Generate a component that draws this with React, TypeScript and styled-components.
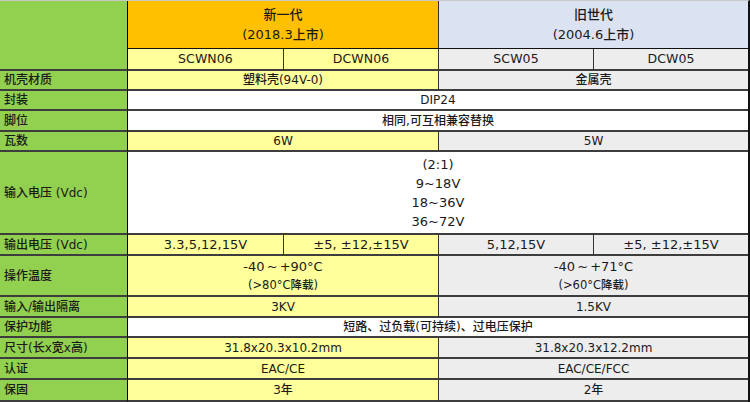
import React from "react";
import styled, { createGlobalStyle, css } from "styled-components";

const Global = createGlobalStyle`
  html, body { margin: 0; padding: 0; background: #ffffff; }
  body { font-family: "DejaVu Sans", "Noto Sans CJK SC", sans-serif; color: #1a1a1a; font-weight: 500; }
`;

const Sheet = styled.div`
  display: grid;
  width: 750px;
  box-sizing: border-box;
  grid-template-columns: 128px 156px 155px 155px 154px;
  grid-template-rows: 48px 22px 20px 20px 21px 20px 83px 21px 41px 21px 20px 21px 21px 22px;
  border-top: 1px solid #c9c9c9;
  border-right: 2px solid #111111;
`;

type Tone = "green" | "orange" | "blue" | "yellow" | "grey" | "white";

const tones: Record<Tone, string> = {
  green: "#92d050",
  orange: "#ffc000",
  blue: "#dbe3f2",
  yellow: "#ffff9c",
  grey: "#ededed",
  white: "#ffffff",
};

const Cell = styled.div<{ $tone: Tone; $col: string; $row?: string; $last?: boolean; $thin?: boolean }>`
  box-sizing: border-box;
  grid-column: ${(p) => p.$col};
  ${(p) => p.$row && css`grid-row: ${p.$row};`}
  background: ${(p) => tones[p.$tone]};
  border-bottom: ${(p) => (p.$thin ? "1px solid #111" : "2px solid #3d3d3d")};
  border-right: ${(p) => (p.$last ? "none" : "1px solid #333")};
  display: flex;
  flex-direction: column;
  align-items: center;
  justify-content: center;
  font-size: 12px;
  line-height: 18px;
  white-space: nowrap;
  overflow: hidden;
`;

const Label = styled(Cell)`
  align-items: flex-start;
  padding-left: 4px;
  border-right: 1px solid #000;
  font-size: 12px;
`;

const Head = styled.span`
  font-size: 13px;
  line-height: 20px;
`;

const Model = styled.span`
  font-size: 12.5px;
  letter-spacing: 0.1px;
`;

const Big = styled.span`
  font-size: 13px;
  line-height: 19px;
`;

const Small = styled.span`
  font-size: 11.5px;
  line-height: 18px;
`;

const Mid = styled.span`
  font-size: 13px;
  line-height: 18px;
`;

const Temp = styled(Mid)`
  word-spacing: -2px;
`;

type Row = {
  label: string;
  kind: "split" | "four" | "full";
  a?: React.ReactNode;
  b?: React.ReactNode;
  cells?: React.ReactNode[];
  full?: React.ReactNode;
};

const rows: Row[] = [
  { label: "机壳材质", kind: "split", a: "塑料壳(94V-0)", b: "金属壳" },
  { label: "封装", kind: "full", full: "DIP24" },
  { label: "脚位", kind: "full", full: "相同,可互相兼容替换" },
  { label: "瓦数", kind: "split", a: "6W", b: "5W" },
  {
    label: "输入电压 (Vdc)",
    kind: "full",
    full: (
      <>
        <Big>(2:1)</Big>
        <Big>9~18V</Big>
        <Big>18~36V</Big>
        <Big>36~72V</Big>
      </>
    ),
  },
  {
    label: "输出电压 (Vdc)",
    kind: "four",
    cells: [
      <Mid key="1">3.3,5,12,15V</Mid>,
      <Mid key="2">±5, ±12,±15V</Mid>,
      <Mid key="3">5,12,15V</Mid>,
      <Mid key="4">±5, ±12,±15V</Mid>,
    ],
  },
  {
    label: "操作温度",
    kind: "split",
    a: (
      <>
        <Temp>-40 ~ +90°C</Temp>
        <Small>(&gt;80°C降载)</Small>
      </>
    ),
    b: (
      <>
        <Temp>-40 ~ +71°C</Temp>
        <Small>(&gt;60°C降载)</Small>
      </>
    ),
  },
  { label: "输入/输出隔离", kind: "split", a: "3KV", b: "1.5KV" },
  { label: "保护功能", kind: "full", full: "短路、过负载(可持续)、过电压保护" },
  { label: "尺寸(长x宽x高)", kind: "split", a: "31.8x20.3x10.2mm", b: "31.8x20.3x12.2mm" },
  { label: "认证", kind: "split", a: "EAC/CE", b: "EAC/CE/FCC" },
  { label: "保固", kind: "split", a: "3年", b: "2年" },
];

export default function App() {
  return (
    <>
      <Global />
      <Sheet>
        <Label $tone="green" $col="1" $row="1 / span 2" />
        <Cell $tone="orange" $col="2 / span 2" $thin>
          <Head>新一代</Head>
          <Head>(2018.3上市)</Head>
        </Cell>
        <Cell $tone="blue" $col="4 / span 2" $thin $last>
          <Head>旧世代</Head>
          <Head>(2004.6上市)</Head>
        </Cell>
        <Cell $tone="yellow" $col="2"><Model>SCWN06</Model></Cell>
        <Cell $tone="yellow" $col="3"><Model>DCWN06</Model></Cell>
        <Cell $tone="grey" $col="4"><Model>SCW05</Model></Cell>
        <Cell $tone="grey" $col="5" $last><Model>DCW05</Model></Cell>
        {rows.map((r) => (
          <React.Fragment key={r.label}>
            <Label $tone="green" $col="1">{r.label}</Label>
            {r.kind === "full" && (
              <Cell $tone="white" $col="2 / span 4" $last>{r.full}</Cell>
            )}
            {r.kind === "split" && (
              <>
                <Cell $tone="yellow" $col="2 / span 2">{r.a}</Cell>
                <Cell $tone="grey" $col="4 / span 2" $last>{r.b}</Cell>
              </>
            )}
            {r.kind === "four" && r.cells && (
              <>
                <Cell $tone="yellow" $col="2">{r.cells[0]}</Cell>
                <Cell $tone="yellow" $col="3">{r.cells[1]}</Cell>
                <Cell $tone="grey" $col="4">{r.cells[2]}</Cell>
                <Cell $tone="grey" $col="5" $last>{r.cells[3]}</Cell>
              </>
            )}
          </React.Fragment>
        ))}
      </Sheet>
    </>
  );
}
